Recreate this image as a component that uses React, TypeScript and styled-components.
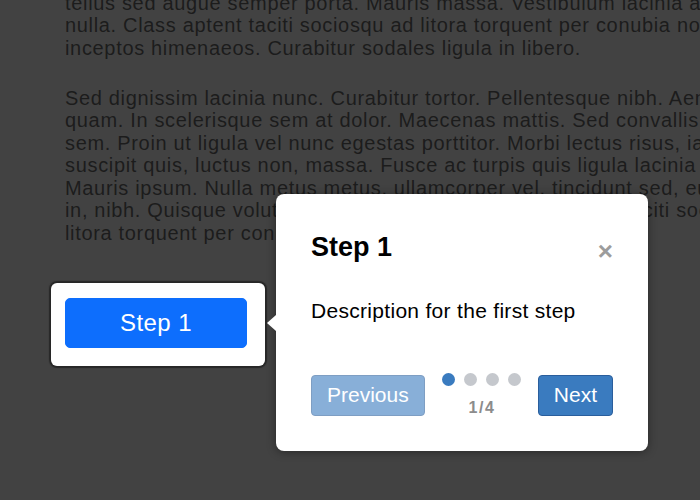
import styled, { createGlobalStyle } from 'styled-components'

const GlobalStyle = createGlobalStyle`
  html, body {
    margin: 0;
    padding: 0;
    overflow: hidden;
    background: #fff;
  }
  body {
    font-family: "Liberation Sans", Arial, sans-serif;
    color: #000;
  }
`

const Viewport = styled.div`
  height: 500px;
  overflow: hidden;
  display: flow-root;
`

// the page is scrolled down a little, so the top lines are out of view
const Page = styled.div`
  width: 727px;
  margin-top: -76px;
  padding-left: 65px;
`

const Paragraph = styled.p`
  margin: 0 0 27.5px;
  font-size: 20px;
  line-height: 22.5px;
  letter-spacing: 0.67px;
`

const Anchor = styled.div`
  position: relative;
  width: 182px;
  margin-top: 54px;
`

const Spotlight = styled.div`
  position: absolute;
  left: -14px;
  top: -15px;
  right: -18px;
  bottom: -18px;
  z-index: 1;
  background: #fff;
  border-radius: 6px;
  box-shadow: rgba(33, 33, 33, 0.8) 0 0 1px 2px, rgba(33, 33, 33, 0.85) 0 0 0 5000px;
`

const StepButton = styled.button`
  position: relative;
  z-index: 2;
  display: block;
  width: 182px;
  height: 50px;
  padding: 0;
  border: 1px solid #0d6efd;
  border-radius: 5px;
  background: #0d6efd;
  color: #fff;
  font-family: "Liberation Sans", Arial, sans-serif;
  font-size: 24px;
  letter-spacing: 0.4px;
`

const Tooltip = styled.div`
  position: absolute;
  left: 211px;
  top: -104px;
  z-index: 3;
  width: 372px;
  background: #fff;
  border-radius: 8px;
  box-shadow: 0 1px 10px rgba(0, 0, 0, 0.4);
`

const Arrow = styled.div`
  position: absolute;
  left: -9px;
  top: 121px;
  width: 0;
  height: 0;
  border-top: 8px solid transparent;
  border-bottom: 8px solid transparent;
  border-right: 9px solid #fff;
`

const Header = styled.div`
  display: flex;
  justify-content: space-between;
  padding: 38px 35px 0;
`

const Title = styled.h1`
  margin: 0;
  font-size: 27px;
  font-weight: bold;
  line-height: 31px;
`

const Close = styled.button`
  align-self: flex-start;
  margin-top: 6px;
  padding: 0;
  border: none;
  background: none;
  color: #9c9c9c;
  font-family: "Liberation Sans", Arial, sans-serif;
  font-size: 26px;
  font-weight: bold;
  line-height: 26px;
  cursor: pointer;
`

const Description = styled.div`
  margin: 35px 35px 0;
  font-size: 21px;
  line-height: 24px;
  letter-spacing: 0.3px;
`

const Footer = styled.div`
  display: flex;
  align-items: center;
  justify-content: space-between;
  margin-top: 50px;
  padding: 0 35px 34px;
`

const NavButton = styled.button<{ $disabled?: boolean }>`
  height: 41px;
  padding: 0 15px;
  border: 1px solid #2a5e9c;
  border-radius: 4px;
  background: #3a7bbf;
  color: #fff;
  font-family: "Liberation Sans", Arial, sans-serif;
  font-size: 21px;
  opacity: ${p => (p.$disabled ? 0.6 : 1)};
  cursor: ${p => (p.$disabled ? 'default' : 'pointer')};
`

const Progress = styled.div`
  display: flex;
  flex-direction: column;
  align-items: center;
`

const Dots = styled.div`
  display: flex;
  gap: 9px;
`

const Dot = styled.span<{ $active?: boolean }>`
  width: 13px;
  height: 13px;
  border-radius: 50%;
  background: ${p => (p.$active ? '#3a7bbf' : '#c5c8cd')};
`

const Counter = styled.div`
  margin-top: 13px;
  padding-left: 1.5px;
  font-size: 16px;
  font-weight: bold;
  line-height: 18px;
  letter-spacing: 1.5px;
  color: #8c8c8c;
`

const steps = [1, 2, 3, 4]

function App() {
  const current = 1
  return (
    <>
      <GlobalStyle />
      <Viewport>
        <Page>
          <Paragraph>
            Lorem ipsum dolor sit amet, consectetur adipiscing elit. Integer nec odio. Praesent libero. Sed cursus
            ante dapibus diam. Sed nisi. Nulla quis sem at nibh elementum imperdiet. Duis sagittis ipsum. Praesent
            mauris. Fusce nec tellus sed augue semper porta. Mauris massa. Vestibulum lacinia arcu eget nulla. Class
            aptent taciti sociosqu ad litora torquent per conubia nostra, per inceptos himenaeos. Curabitur sodales
            ligula in libero.
          </Paragraph>
          <Paragraph>
            Sed dignissim lacinia nunc. Curabitur tortor. Pellentesque nibh. Aenean quam. In scelerisque sem at
            dolor. Maecenas mattis. Sed convallis tristique sem. Proin ut ligula vel nunc egestas porttitor. Morbi
            lectus risus, iaculis vel, suscipit quis, luctus non, massa. Fusce ac turpis quis ligula lacinia aliquet.
            Mauris ipsum. Nulla metus metus, ullamcorper vel, tincidunt sed, euismod in, nibh. Quisque volutpat
            condimentum velit. Class aptent taciti sociosqu ad litora torquent per conubia nostra, per inceptos
            himenaeos.
          </Paragraph>
          <Anchor>
            <Spotlight />
            <StepButton>Step 1</StepButton>
            <Tooltip>
              <Arrow />
              <Header>
                <Title>Step 1</Title>
                <Close>×</Close>
              </Header>
              <Description>Description for the first step</Description>
              <Footer>
                <NavButton $disabled>Previous</NavButton>
                <Progress>
                  <Dots>
                    {steps.map(s => (
                      <Dot key={s} $active={s === current} />
                    ))}
                  </Dots>
                  <Counter>
                    {current}/{steps.length}
                  </Counter>
                </Progress>
                <NavButton>Next</NavButton>
              </Footer>
            </Tooltip>
          </Anchor>
        </Page>
      </Viewport>
    </>
  )
}

export default App
